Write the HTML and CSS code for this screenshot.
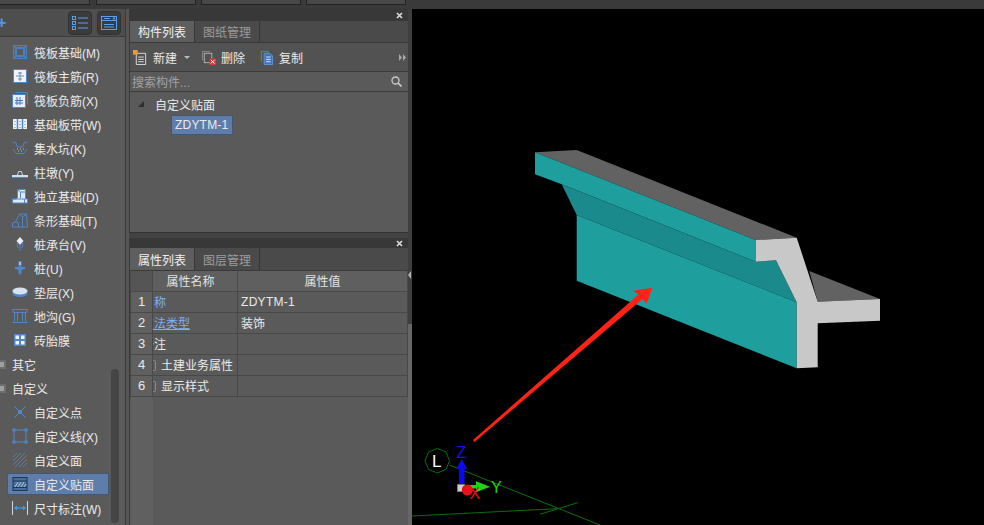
FILE: index.html
```html
<!DOCTYPE html>
<html lang="zh-CN">
<head>
    <meta charset="UTF-8">
    <title>自定义贴面</title>
    <link rel="stylesheet" href="styles.css">
</head>
<body>

<div class="topStrip">
    <div class="topTab tabA"></div>
    <div class="topTab tabB"></div>
    <div class="topTab tabB"></div>
    <div class="topTab tabB"></div>
</div>

<div class="main">

    <!-- left module list -->
    <div class="sidebar">
        <div class="sideBar">
            <span class="plus">+</span>
            <button class="sideBtn">
                <svg width="16" height="14" viewBox="0 0 16 14"><g fill="none" stroke="#5aa0e6" stroke-width="1"><rect x="0.5" y="0.5" width="3" height="3"/><rect x="0.5" y="5.5" width="3" height="3"/><rect x="0.5" y="10.5" width="3" height="3"/><path d="M6 2h10M6 7h10M6 12h10"/></g></svg>
            </button>
            <button class="sideBtn">
                <svg width="16" height="14" viewBox="0 0 16 14"><g fill="none" stroke="#5aa0e6" stroke-width="1"><rect x="0.5" y="0.5" width="15" height="13"/><path d="M0 4.5h16M3 8.5h10M3 11h10"/><path d="M3 2.5h6M12 2h2l-1 1.5z"/></g></svg>
            </button>
        </div>

        <div class="item"><svg class="ico" viewBox="0 0 16 16"><g fill="none" stroke="#4a7fc0"><rect x="1.500" y="1.500" width="13" height="13"/><rect x="4.500" y="4.500" width="7" height="7"/><path d="M1 3.500h14M1 12.500h14M3.500 1v14M12.500 1v14M7 1v3M9.500 1v3M7 12v3M9.500 12v3M1 7h3M1 9.500h3M12 7h3M12 9.500h3"/></g></svg><span>筏板基础(M)</span></div>
        <div class="item"><svg class="ico" viewBox="0 0 16 16"><rect x="1.500" y="1.500" width="13" height="13" fill="#f0f4f8" stroke="#4f86c9"/><path d="M8 4v9M4 8h8M6 5h4M6 11h4" fill="none" stroke="#6f8cab"/></svg><span>筏板主筋(R)</span></div>
        <div class="item"><svg class="ico" viewBox="0 0 16 16"><path d="M3.500 0.500h12v12" fill="none" stroke="#4f86c9"/><rect x="0.500" y="2.500" width="13" height="13" fill="#e8eef5" stroke="#4f86c9"/><path d="M5 5v8M8 5v8M3 8.500h8M3 11h8" fill="none" stroke="#3f78bd"/></svg><span>筏板负筋(X)</span></div>
        <div class="item"><svg class="ico" viewBox="0 0 16 16"><rect x="1" y="3" width="14" height="10" fill="#eef3f8"/><path d="M5.500 3v10M10.500 3v10" stroke="#4f86c9" stroke-width="1.500"/><path d="M3 5v1M3 8v1M3 11v1M8 5v1M8 8v1M8 11v1M13 5v1M13 8v1M13 11v1" stroke="#4f86c9"/></svg><span>基础板带(W)</span></div>
        <div class="item"><svg class="ico" viewBox="0 0 16 16"><path d="M1 2l3 1 1.500 4h5L12 3l3-1M1 9l3 4.500h8l3-4.500" fill="none" stroke="#4f86c9"/><path d="M5 9h1M8 9h1M11 9h1M6 11h1M9 11h1" stroke="#b8c2cc"/></svg><span>集水坑(K)</span></div>
        <div class="item"><svg class="ico" viewBox="0 0 16 16"><path d="M0 11h16v2.500H0z" fill="#cfe0f2"/><path d="M0 13.500h16" stroke="#4f86c9"/><path d="M5.500 11l1-3.500h3l1 3.500" fill="none" stroke="#c8d4e0"/></svg><span>柱墩(Y)</span></div>
        <div class="item"><svg class="ico" viewBox="0 0 16 16"><path d="M0.500 15v-4h4l1-1.500V1.500h8V11h2v4z" fill="#dfe9f3" stroke="#4f86c9"/><path d="M5.500 1.500l3 2.500v6M8.500 4h5M0.500 11h12v4" fill="none" stroke="#4f86c9"/></svg><span>独立基础(D)</span></div>
        <div class="item"><svg class="ico" viewBox="0 0 16 16"><path d="M0.500 15v-4l3-1 4-8h7l1 13zM7.500 2l3 3v10M10.500 5l4-3M3.500 10l3 1v4" fill="none" stroke="#4f86c9"/></svg><span>条形基础(T)</span></div>
        <div class="item"><svg class="ico" viewBox="0 0 16 16"><path d="M8 1l3.500 4L8 9 4.500 5z" fill="#e6eef7"/><path d="M5 7l1 5M11 7l-1 5M8 8v7" stroke="#4f86c9" fill="none"/></svg><span>桩承台(V)</span></div>
        <div class="item"><svg class="ico" viewBox="0 0 16 16"><path d="M6.500 1h3v6H13v2l-3.500 1v3L8 15l-1.500-2v-3L3 9V7h3.500z" fill="#4f86c9"/><path d="M7 2h2v3H7z" fill="#9ec0e6"/></svg><span>桩(U)</span></div>
        <div class="item"><svg class="ico" viewBox="0 0 16 16"><path d="M0.500 7v2.500C0.500 11.500 4 13 8 13s7.500-1.500 7.500-3.500V7z" fill="#4f86c9"/><ellipse cx="8" cy="7" rx="7.500" ry="3.500" fill="#d7e3ef"/></svg><span>垫层(X)</span></div>
        <div class="item"><svg class="ico" viewBox="0 0 16 16"><path d="M0.500 1.500h15l-1 3h-13zM2.500 4.500v9M13.500 4.500v9M5.500 4.500v9M10.500 4.500v9M0.500 14.500h15" fill="none" stroke="#4f86c9"/></svg><span>地沟(G)</span></div>
        <div class="item"><svg class="ico" viewBox="0 0 16 16"><rect x="2" y="2" width="12" height="12" fill="#4f86c9"/><path d="M3.500 3.500h3.500v3.500H3.500zM9 3.500h3.500v3.500H9zM3.500 9h3.500v3.500H3.500zM9 9h3.500v3.500H9z" fill="#eef3f8"/></svg><span>砖胎膜</span></div>

        <div class="group"><i class="groupIcon"></i><span>其它</span></div>
        <div class="group"><i class="groupIcon"></i><span>自定义</span></div>

        <div class="item"><svg class="ico" viewBox="0 0 16 16"><path d="M2 2l12 12M14 2L2 14" stroke="#4f86c9" fill="none"/><rect x="6.500" y="6.500" width="3" height="3" fill="none" stroke="#4f86c9"/></svg><span>自定义点</span></div>
        <div class="item"><svg class="ico" viewBox="0 0 16 16"><rect x="2" y="2" width="12" height="12" fill="none" stroke="#4f86c9"/><path d="M0.500 0.500h3v3h-3zM12.500 0.500h3v3h-3zM0.500 12.500h3v3h-3zM12.500 12.500h3v3h-3z" fill="#4f86c9"/></svg><span>自定义线(X)</span></div>
        <div class="item"><svg class="ico" viewBox="0 0 16 16"><path d="M1 5l4-4M1 9l8-8M1 13L13 1M3 15L15 3M7 15l8-8M11 15l4-4" stroke="#4f7fb8" fill="none"/></svg><span>自定义面</span></div>
        <div class="item active"><svg class="ico" viewBox="0 0 16 16"><rect x="1" y="1.500" width="14" height="13" fill="#46709f" stroke="#1f3550"/><path d="M1 5h14M1 11.500h14" stroke="#1f3550"/><path d="M3 11l3-5M6 11l3-5M9 11l3-5M12 11l2-3" stroke="#b8c8da"/></svg><span>自定义贴面</span></div>
        <div class="item"><svg class="ico" viewBox="0 0 16 16"><path d="M0.500 1v14M15.500 1v14" stroke="#cfd6de" fill="none"/><path d="M3 8h10" stroke="#3f9cf0" stroke-width="1.200"/><path d="M2 8l3-2.500v5zM14 8l-3-2.500v5z" fill="#3f9cf0"/></svg><span>尺寸标注(W)</span></div>

        <div class="sideScroll"></div>
    </div>

    <div class="sideGap"></div>

    <div class="middle">

        <!-- component list panel -->
        <div class="panel panelTop">
            <div class="panelHead"><svg class="closeX" viewBox="0 0 7 7"><path d="M1 1l5 5M6 1L1 6" stroke="#dcdcdc" stroke-width="1.600"/></svg></div>
            <div class="tabs">
                <div class="tab on">构件列表</div>
                <div class="tab">图纸管理</div>
            </div>
            <div class="tools">
                <span class="tool">
                    <svg class="toolIco" viewBox="0 0 16 16"><path d="M3.500 3.500h10v12h-10z" fill="none" stroke="#ddd"/><path d="M5.500 7.500h6M5.500 10h6M5.500 12.500h6" stroke="#ddd"/><rect x="0" y="0" width="5" height="5" fill="#f09a2e"/></svg>
                    新建
                </span>
                <i class="caret"></i>
                <span class="tool">
                    <svg class="toolIco" viewBox="0 0 16 16"><path d="M1.500 11V1.500h8" fill="none" stroke="#8a8a8a"/><rect x="3.500" y="3.500" width="8" height="10" fill="none" stroke="#b5b5b5"/><rect x="9" y="9" width="7" height="7" fill="#d43a3a"/><path d="M10.500 10.500l4 4M14.500 10.500l-4 4" stroke="#fff"/></svg>
                    删除
                </span>
                <span class="tool">
                    <svg class="toolIco" viewBox="0 0 16 16"><path d="M2.500 12V1.500h8" fill="none" stroke="#4f86c9"/><path d="M5.500 3.500h6l3 3v9h-9z" fill="#3f74b5" stroke="#5f98db"/><path d="M7.500 7.500h5M7.500 10h5M7.500 12.500h5" stroke="#dfe9f5"/></svg>
                    复制
                </span>
                <svg class="more" viewBox="0 0 7 7"><path d="M0 0l3 3.500L0 7zM4 0l3 3.500L4 7z" fill="#aaa"/></svg>
            </div>
            <div class="search">
                <span>搜索构件...</span>
                <svg width="11" height="11" viewBox="0 0 11 11"><circle cx="4.500" cy="4.500" r="3.500" fill="none" stroke="#ccc" stroke-width="1.300"/><path d="M7 7l3.500 3.500" stroke="#ccc" stroke-width="1.600"/></svg>
            </div>
            <div class="tree">
                <div class="treeRoot"><i class="treeArrow"></i>自定义贴面</div>
                <div class="treeLeaf">ZDYTM-1</div>
            </div>
        </div>

        <!-- property panel -->
        <div class="panel panelBottom">
            <div class="panelHead"><svg class="closeX" viewBox="0 0 7 7"><path d="M1 1l5 5M6 1L1 6" stroke="#dcdcdc" stroke-width="1.600"/></svg></div>
            <div class="tabs">
                <div class="tab on">属性列表</div>
                <div class="tab">图层管理</div>
            </div>
            <table class="props">
                <colgroup><col class="colNum"><col class="colName"><col></colgroup>
                <thead>
                    <tr><th></th><th class="thName">属性名称</th><th>属性值</th></tr>
                </thead>
                <tbody>
                    <tr><td class="num">1</td><td class="name"><span class="cut blue">名称</span></td><td class="latin">ZDYTM-1</td></tr>
                    <tr><td class="num">2</td><td class="name"><span class="cut blue under">做法类型</span></td><td>装饰</td></tr>
                    <tr><td class="num">3</td><td class="name"><span class="cut">备注</span></td><td></td></tr>
                    <tr><td class="num">4</td><td class="name"><i class="bracket"></i>土建业务属性</td><td></td></tr>
                    <tr><td class="num">6</td><td class="name"><i class="bracket"></i>显示样式</td><td></td></tr>
                    <tr class="filler"><td class="num"></td><td colspan="2"></td></tr>
                </tbody>
            </table>
        </div>
    </div>

    <div class="splitter"><i class="splitDark"></i><i class="splitArrow"></i></div>

    <!-- 3d view -->
    <div class="canvas">
        <svg class="scene" viewBox="412 9 572 516">
            <g class="ground">
                <path d="M449.300 465L600 525M411.700 516L556.700 508.700M540 514.300L577.700 502.700"/>
                <polygon points="437.300,448.500 446,452 449.500,460.700 446,469.400 437.300,473 428.600,469.400 425,460.700 428.600,452"/>
            </g>
            <text class="lbl lblL" x="432" y="467">L</text>

            <!-- beam -->
            <polygon fill="#626262" points="809.300,271 880,299 817.700,301.700"/>
            <polygon fill="#626262" points="535,152.300 576.700,150 796.700,237.700 755.700,240"/>
            <polygon fill="#1f9e9e" points="535,152.300 755.700,240 755.700,261.700 561.700,184.300 535,174.300"/>
            <polygon fill="#1b8a8c" points="561.700,184.300 755.700,261.700 776,260.300 796.700,302.300 576.700,215"/>
            <polygon fill="#1f9e9e" points="576.700,215 796.700,302.300 796.700,368.300 576.700,280.700"/>
            <polygon fill="#c8c8c8" points="755.700,240 796.700,237.700 817.700,301.700 880,299 880,320.700 817.700,323.300 817.700,367.300 796.700,368.300 796.700,302.300 776,260.300 755.700,261.700"/>

            <!-- red arrow -->
            <polygon fill="#ff2216" points="652.300,287.700 633.300,290.700 638.500,294.500 473,440 474.500,442 642.500,299 646.700,303.300"/>

            <!-- axis -->
            <rect x="457.500" y="484.500" width="7" height="7" fill="#d0d0d0" stroke="#777"/>
            <path d="M459 484V468h5.500v16z" fill="#0a0af0"/>
            <path d="M461.700 459l5.500 10h-11z" fill="#0a0af0"/>
            <path d="M470 485h8v3.500h-8z" fill="#16d816"/>
            <path d="M490 486.700l-14-5.500v11z" fill="#16d816"/>
            <circle cx="467.300" cy="490" r="5.500" fill="#e8101a"/>
            <text class="lbl lblZ" x="456.500" y="458">Z</text>
            <text class="lbl lblY" x="491" y="492.500">Y</text>
            <text class="lbl lblX" x="469.500" y="499">X</text>
        </svg>
    </div>
</div>

</body>
</html>
```

FILE: styles.css
```css
* {
    box-sizing: border-box;
}
html, body {
    margin: 0;
    height: 525px;
    overflow: hidden;
}
body {
    display: flex;
    flex-direction: column;
    background-color: #3d3d3d;
    color: #eaeaea;
    font-family: "Liberation Sans", "Noto Sans CJK SC", sans-serif;
    font-size: 12px;
}

/* strip of tabs cut off at the top */
.topStrip {
    height: 9px;
    display: flex;
    gap: 6px;
    background-color: #3a3a3a;
}
.topTab {
    height: 5px;
    background-color: #484848;
    border-right: 1px solid #222;
    border-bottom: 1px solid #222;
    border-left: 1px solid #222;
}
.tabA { width: 90px; border-left: 0; }
.tabB { width: 100px; }
.topStrip .tabB + .tabB { margin-left: -1px; }

.main {
    flex: 1;
    display: flex;
    min-height: 0;
}

/* left list */
.sidebar {
    width: 125px;
    position: relative;
    overflow: hidden;
    background-color: #5a5a5a;
}
.sideBar {
    height: 28px;
    margin-bottom: 5px;
    display: flex;
    align-items: center;
    gap: 5px;
    padding-right: 4px;
    background-color: #4e4e4e;
    border-bottom: 1px solid #3c3c3c;
}
.plus {
    margin-right: auto;
    margin-left: -3px;
    color: #4d9be8;
    font-size: 16px;
    font-weight: bold;
}
.sideBtn {
    width: 24px;
    height: 24px;
    padding: 0;
    display: flex;
    align-items: center;
    justify-content: center;
    background-color: #3b3b3b;
    border: 1px solid #333;
    border-radius: 4px;
}
.item {
    width: 100px;
    height: 20px;
    margin: 0 0 4px 8px;
    padding-left: 4px;
    display: flex;
    align-items: center;
    gap: 6px;
    white-space: nowrap;
}
.item.active {
    background-color: #5f7dab;
    outline: 1px solid #44576f;
}
.ico {
    width: 16px;
    height: 16px;
    flex: none;
}
.group {
    height: 20px;
    margin-bottom: 4px;
    display: flex;
    align-items: center;
    gap: 6px;
}
.groupIcon {
    width: 6px;
    height: 9px;
    background-color: #a0a0a0;
    border: 2px solid #6d6d6d;
    border-left: 0;
}
.sideScroll {
    position: absolute;
    left: 111px;
    top: 360px;
    width: 8px;
    height: 154px;
    background-color: #454545;
    border-radius: 4px;
}
.sideGap {
    width: 4px;
    background-color: #555;
    border-left: 1px solid #3a3a3a;
}

/* middle panels */
.middle {
    width: 279px;
    display: flex;
    flex-direction: column;
    gap: 5px;
    background-color: #434343;
}
.panel {
    display: flex;
    flex-direction: column;
    background-color: #5a5a5a;
    border-left: 1px solid #3a3a3a;
}
.panelTop {
    height: 224px;
    border-bottom: 1px solid #333;
}
.panelBottom {
    flex: 1;
    min-height: 0;
}
.panelHead {
    height: 12px;
    display: flex;
    align-items: center;
    justify-content: flex-end;
    padding-right: 5px;
    background-color: #383838;
}
.panelBottom .panelHead {
    height: 10px;
}
.closeX {
    width: 7px;
    height: 7px;
}
.tabs {
    height: 22px;
    display: flex;
    background-color: #4a4a4a;
    border-bottom: 1px solid #3a3a3a;
}
.panelBottom .tabs {
    height: 23px;
}
.tab {
    width: 65px;
    display: flex;
    align-items: center;
    justify-content: center;
    color: #9c9c9c;
    border-right: 1px solid #383838;
}
.tab.on {
    background-color: #5e5e5e;
    color: #f0f0f0;
}

/* toolbar and search */
.tools {
    height: 29px;
    display: flex;
    align-items: center;
    padding-left: 3px;
    background-color: #525252;
    border-bottom: 1px solid #3c3c3c;
}
.tool {
    display: flex;
    align-items: center;
    gap: 5px;
    margin-right: 14px;
}
.tool:first-child {
    margin-right: 7px;
}
.toolIco {
    width: 15px;
    height: 15px;
}
.caret {
    width: 0;
    height: 0;
    margin-right: 11px;
    border-top: 3px solid #bbb;
    border-right: 3px solid transparent;
    border-left: 3px solid transparent;
}
.more {
    width: 7px;
    height: 7px;
    margin-left: auto;
    margin-right: 2px;
}
.search {
    height: 20px;
    display: flex;
    align-items: center;
    justify-content: space-between;
    padding: 0 6px 0 2px;
    color: #a2a2a2;
    background-color: #5a5a5a;
    border-bottom: 1px solid #3c3c3c;
}
.tree {
    flex: 1;
    padding-top: 1px;
}
.treeRoot {
    height: 22px;
    display: flex;
    align-items: center;
    padding-left: 25px;
    position: relative;
}
.treeArrow {
    position: absolute;
    left: 8px;
    top: 8px;
    border-bottom: 6px solid #2e2e2e;
    border-left: 6px solid transparent;
}
.treeLeaf {
    width: 62px;
    height: 20px;
    line-height: 18px;
    margin-left: 41px;
    padding-left: 3px;
    letter-spacing: 0.2px;
    background-color: #5f7dab;
    border: 1px solid #44576f;
}

/* property table */
.props {
    width: 100%;
    flex: 1;
    border-collapse: collapse;
    table-layout: fixed;
}
.colNum { width: 22px; }
.colName { width: 85px; }
.props th {
    height: 20px;
    font-weight: normal;
    color: #e2e2e2;
    background-color: #5f5f5f;
    border: 1px solid #4a4a4a;
    border-top: 0;
}
.props .thName {
    padding-right: 10px;
}
.props td {
    height: 21px;
    padding: 0 0 0 3px;
    overflow: hidden;
    white-space: nowrap;
    border: 1px solid #484848;
}
.props .latin {
    letter-spacing: 0.3px;
}
.props th:first-child {
    background-color: #555;
}
.props td.num {
    padding: 0;
    text-align: center;
    font-size: 13px;
    background-color: #606060;
}
.props td.name {
    padding-left: 8px;
    position: relative;
}
.cut {
    display: block;
    margin-left: -19px;
}
.blue {
    color: #7fb0f0;
}
.under {
    text-decoration: underline;
}
.bracket {
    position: absolute;
    left: 0;
    top: 5px;
    width: 3px;
    height: 11px;
    border: 1px solid #8a8a8a;
    border-left: 0;
    border-radius: 0 2px 2px 0;
}
.filler td {
    height: auto;
    border: 0;
}

.splitter {
    width: 4px;
    position: relative;
    background-color: #666;
}
.splitDark {
    display: block;
    width: 4px;
    height: 315px;
    background-color: #3e3e3e;
}
.splitArrow {
    position: absolute;
    top: 262px;
    left: 0;
    border-top: 4px solid transparent;
    border-right: 3px solid #b0b0b0;
    border-bottom: 4px solid transparent;
}

/* 3d view */
.canvas {
    flex: 1;
    background-color: #000;
}
.scene {
    display: block;
    width: 100%;
    height: 100%;
}
.ground {
    fill: none;
    stroke: #0b6e0b;
    stroke-width: 1;
}
.lbl {
    font-family: "Liberation Sans", sans-serif;
    font-size: 16px;
}
.lblL { fill: #fff; font-size: 17px; }
.lblZ { fill: #1010f0; }
.lblY { fill: #16d816; }
.lblX { fill: #e8101a; }
```
